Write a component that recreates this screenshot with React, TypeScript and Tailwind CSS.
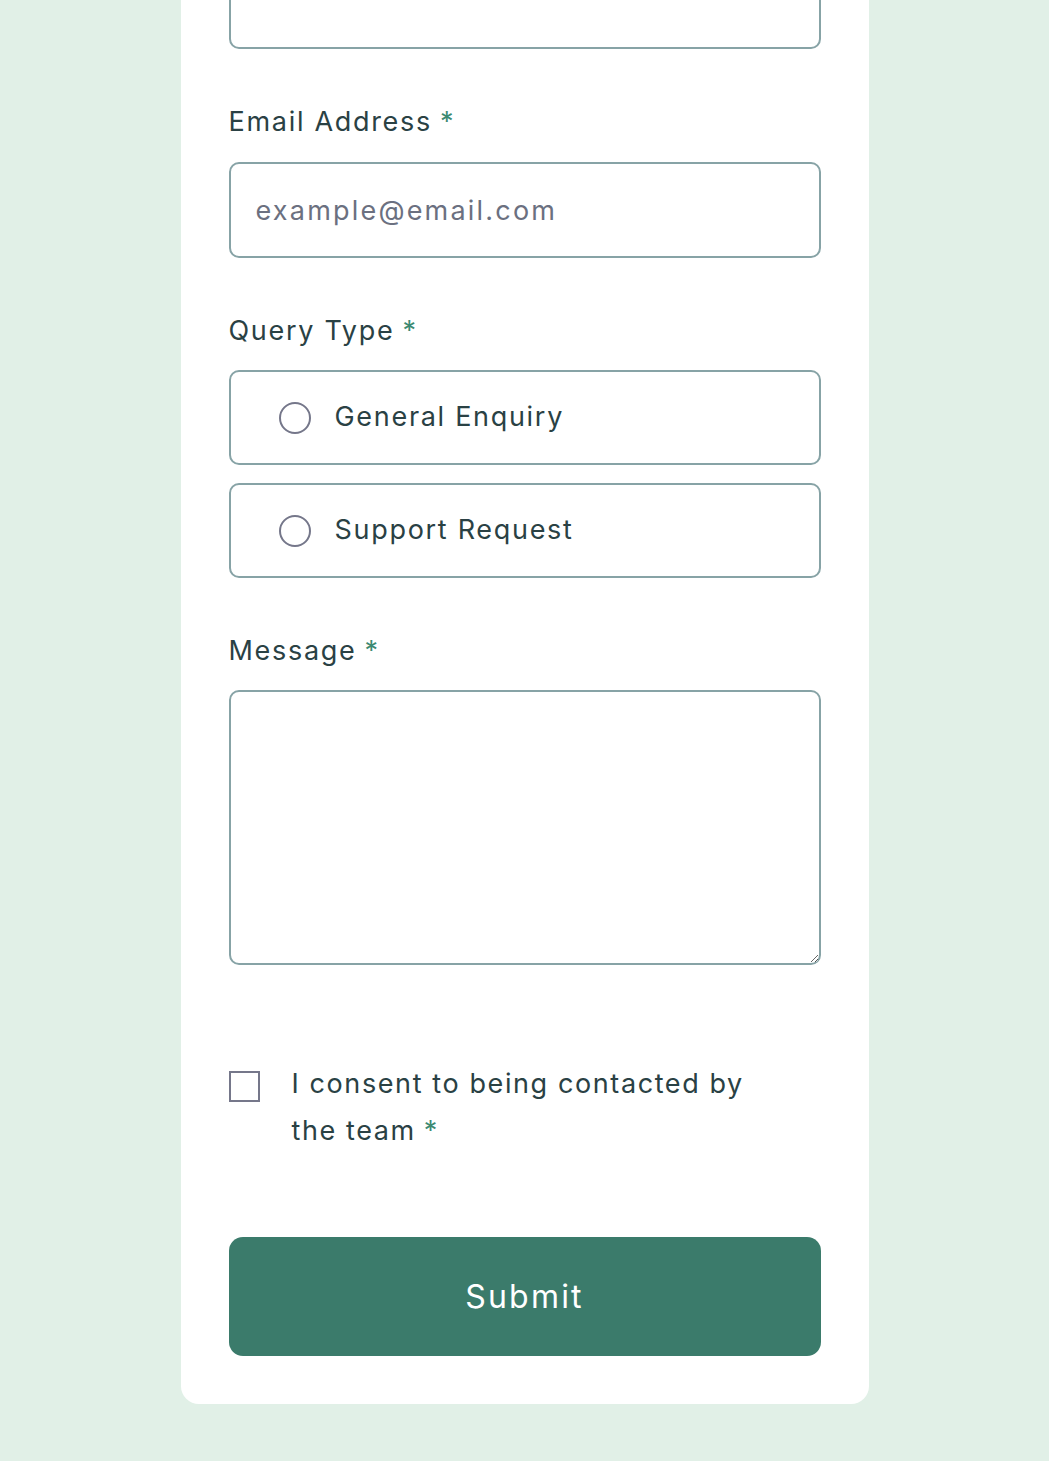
import React from 'react';

const Req = () => <span className="ml-2 text-[#3c8a72]">*</span>;

const labelCls = "block text-[27px] leading-[42px] tracking-[1.7px] text-[#2a4144]";
const boxCls = "w-full rounded-[10px] border-2 border-[#87a3a6] bg-white";

export default function App() {
  return (
    <div className="min-h-[1461px] bg-[#e1f0e7] font-['Inter',sans-serif] overflow-hidden">
      <form className="mx-auto mt-[-47px] w-[688px] rounded-b-[18px] bg-white px-12 pb-12">
        <input type="text" className={`${boxCls} h-[96px] px-[26px] text-[27px] outline-none`} />

        <div className="mt-[52px]">
          <label className={labelCls}>
            Email Address<Req />
          </label>
          <input
            type="email"
            placeholder="example@email.com"
            className={`${boxCls} mt-[19px] h-[96px] px-[25px] text-[27px] tracking-[2.2px] text-[#2a4144] outline-none placeholder:text-[#6b7080]`}
          />
        </div>

        <div className="mt-[52px]">
          <span className={labelCls}>
            Query Type<Req />
          </span>
          <div className="mt-[18px] flex flex-col gap-[18px]">
            {["General Enquiry", "Support Request"].map((q) => (
              <label key={q} className={`${boxCls} flex h-[95px] items-center gap-[24px] px-[48px]`}>
                <span className="h-[32px] w-[32px] shrink-0 rounded-full border-2 border-[#75778a]" />
                <span className="text-[27px] tracking-[1.7px] text-[#2a4144]">{q}</span>
              </label>
            ))}
          </div>
        </div>

        <div className="mt-[52px]">
          <label className={labelCls}>
            Message<Req />
          </label>
          <textarea className={`${boxCls} mt-[18px] block h-[275px] resize-y p-[20px] text-[27px] outline-none`} />
        </div>

        <label className="mt-[95px] flex items-start gap-[32px]">
          <span className="mt-[11px] h-[31px] w-[31px] shrink-0 border-2 border-[#75778a]" />
          <span className="max-w-[470px] text-[27px] leading-[47px] tracking-[1.6px] text-[#2a4144]">
            I consent to being contacted by the team<Req />
          </span>
        </label>

        <button
          type="button"
          className="mt-[83px] h-[119px] w-full rounded-[14px] bg-[#3b7b6b] text-[32px] tracking-[2.2px] text-white"
        >
          Submit
        </button>
      </form>
    </div>
  );
}
